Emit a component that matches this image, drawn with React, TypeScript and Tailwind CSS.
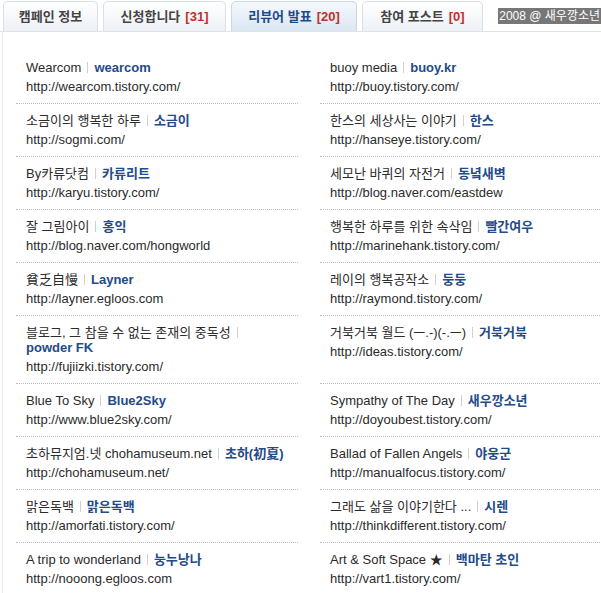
import React from 'react';

type Reviewer = { title: string; name: string; url: string };

const left: Reviewer[] = [
  { title: 'Wearcom', name: 'wearcom', url: 'http://wearcom.tistory.com/' },
  { title: '소금이의 행복한 하루', name: '소금이', url: 'http://sogmi.com/' },
  { title: 'By카류닷컴', name: '카류리트', url: 'http://karyu.tistory.com/' },
  { title: '잘 그림아이', name: '홍익', url: 'http://blog.naver.com/hongworld' },
  { title: '貧乏自慢', name: 'Layner', url: 'http://layner.egloos.com' },
  { title: '블로그, 그 참을 수 없는 존재의 중독성', name: 'powder FK', url: 'http://fujiizki.tistory.com/' },
  { title: 'Blue To Sky', name: 'Blue2Sky', url: 'http://www.blue2sky.com/' },
  { title: '초하뮤지엄.넷 chohamuseum.net', name: '초하(初夏)', url: 'http://chohamuseum.net/' },
  { title: '맑은독백', name: '맑은독백', url: 'http://amorfati.tistory.com/' },
  { title: 'A trip to wonderland', name: '눙누낭나', url: 'http://nooong.egloos.com' },
];

const right: Reviewer[] = [
  { title: 'buoy media', name: 'buoy.kr', url: 'http://buoy.tistory.com/' },
  { title: '한스의 세상사는 이야기', name: '한스', url: 'http://hanseye.tistory.com/' },
  { title: '세모난 바퀴의 자전거', name: '동녘새벽', url: 'http://blog.naver.com/eastdew' },
  { title: '행복한 하루를 위한 속삭임', name: '빨간여우', url: 'http://marinehank.tistory.com/' },
  { title: '레이의 행복공작소', name: '둥둥', url: 'http://raymond.tistory.com/' },
  { title: '거북거북 월드 (ㅡ.-)(-.ㅡ)', name: '거북거북', url: 'http://ideas.tistory.com/' },
  { title: 'Sympathy of The Day', name: '새우깡소년', url: 'http://doyoubest.tistory.com/' },
  { title: 'Ballad of Fallen Angels', name: '야웅군', url: 'http://manualfocus.tistory.com/' },
  { title: '그래도 삶을 이야기한다 ...', name: '시렌', url: 'http://thinkdifferent.tistory.com/' },
  { title: 'Art & Soft Space ★', name: '백마탄 초인', url: 'http://vart1.tistory.com/' },
];

const tabs = [
  { label: '캠페인 정보', count: null, width: 'w-[95px]', active: false },
  { label: '신청합니다', count: '31', width: 'w-[123px]', active: false },
  { label: '리뷰어 발표', count: '20', width: 'w-[126px]', active: true },
  { label: '참여 포스트', count: '0', width: 'w-[121px]', active: false },
];

const Item: React.FC<{ r: Reviewer }> = ({ r }) => (
  <div className="border-b border-dotted border-[#bdbdbd] pl-[10px] pt-[9px] pb-[9px]">
    <div className="leading-[15px] text-[#2b2b2b]">
      {r.title}
      <span className="mx-[6px] inline-block h-[11px] w-px bg-[#d0d0d0] align-[-1px]" />
      <span className="whitespace-nowrap font-bold text-[#234a89]">{r.name}</span>
    </div>
    <div className="mt-[4px] leading-[15px] text-[#2b2b2b]">{r.url}</div>
  </div>
);

export default function App() {
  const rows: React.ReactNode[] = [];
  left.forEach((r, i) => {
    rows.push(<Item key={'l' + i} r={r} />);
    rows.push(<Item key={'r' + i} r={right[i]} />);
  });

  return (
    <div className="h-[593px] w-[601px] overflow-hidden bg-white font-['Liberation_Sans','Noto_Sans_CJK_KR',sans-serif] text-[13px]">
      <div className="flex h-[32px] items-start border-b border-[#dde3ea] pl-[3px]">
        <div className="flex shrink-0 gap-[5px]">
          {tabs.map((t) => (
            <div
              key={t.label}
              className={
                'mt-[1px] flex h-[30px] items-center justify-center rounded-t-[5px] border border-b-0 text-[13px] font-bold ' +
                t.width +
                (t.active
                  ? ' border-[#cbd7e5] bg-gradient-to-b from-[#f4f8fc] to-[#dce7f3] text-[#1f4a8a]'
                  : ' border-[#d9e0e8] bg-gradient-to-b from-white to-[#edf1f6] text-[#444]')
              }
            >
              {t.label}
              {t.count !== null && <span className="ml-[5px] text-[#c0302c]">[{t.count}]</span>}
            </div>
          ))}
        </div>
        <div className="ml-auto mt-[8px] h-[16px] shrink-0 whitespace-nowrap bg-[#777] px-[1px] text-[12px] leading-[16px] text-white">
          2008 @ 새우깡소년
        </div>
      </div>
      <div className="ml-[2px] h-full border-l border-[#e6eaf0] pl-[13px] pt-[19px]">
        <div className="grid grid-cols-[282px_282px] gap-x-[22px]">{rows}</div>
      </div>
    </div>
  );
}
